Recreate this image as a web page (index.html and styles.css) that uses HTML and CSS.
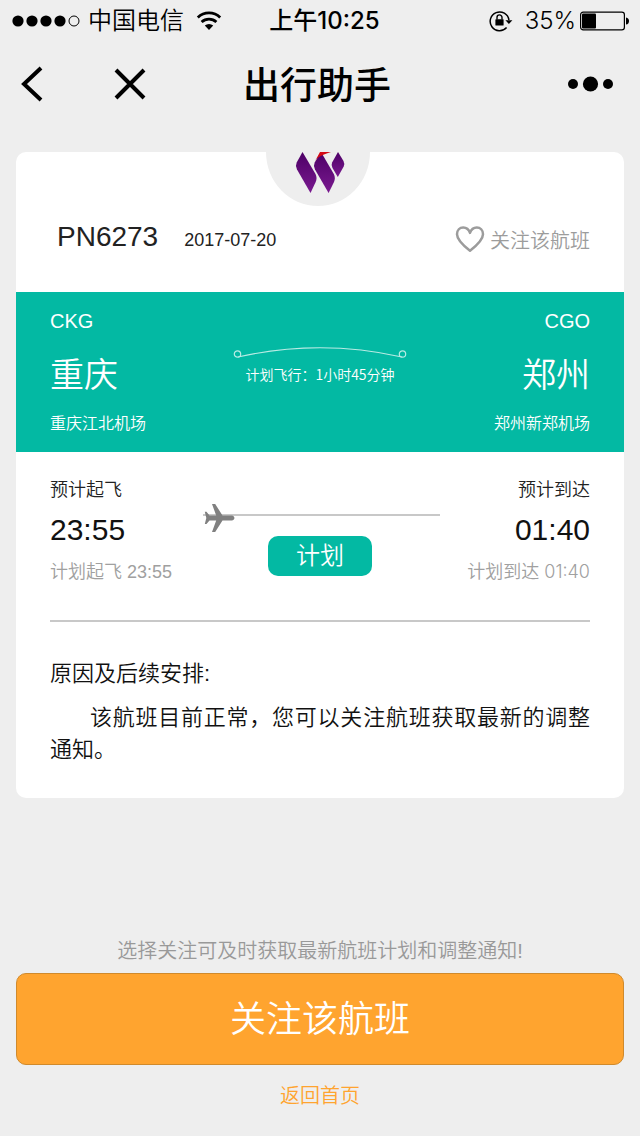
FILE: index.html
```
<!DOCTYPE html>
<html lang="zh-CN">
<head>
  <meta charset="UTF-8">
  <meta name="viewport" content="width=device-width, initial-scale=1.0">
  <title>出行助手</title>
  <link rel="stylesheet" href="styles.css">
</head>
<body>
  <div class="status-bar">
    <div class="carrier">
      <svg width="68" height="12" viewBox="0 0 68 12">
        <circle cx="6" cy="6" r="5.6"/><circle cx="20" cy="6" r="5.6"/><circle cx="34" cy="6" r="5.6"/><circle cx="48" cy="6" r="5.6"/>
        <circle cx="62" cy="6" r="5" fill="none" stroke="#000"/>
      </svg>
      <span>中国电信</span>
      <svg class="wifi" width="26" height="20" viewBox="0 0 26 20">
        <g fill="none" stroke="#000" stroke-width="2.8">
          <path d="M1.8 6.400a16.200 16.200 0 0 1 22.400 0"/>
          <path d="M5.600 11a10.800 10.800 0 0 1 14.800 0"/>
        </g>
        <path d="M13 19l-4.200-4.400a6 6 0 0 1 8.400 0z"/>
      </svg>
    </div>
    <span class="clock">上午10:25</span>
    <div class="power">
      <svg width="24" height="22" viewBox="0 0 24 22">
        <path d="M17.600 17.600A9.400 9.400 0 1 1 19.900 10" fill="none" stroke="#000" stroke-width="1.500"/>
        <path d="M16.400 10.200h7l-3.500 3.800z"/>
        <rect x="6.400" y="9.200" width="8.200" height="6.400" rx=".6"/>
        <path d="M8 9.600V7.400a2.500 2.500 0 0 1 5 0v2.200" fill="none" stroke="#000" stroke-width="1.400"/>
      </svg>
      <span class="percent">35%</span>
      <svg width="49" height="20" viewBox="0 0 49 20">
        <rect x=".6" y="1.100" width="43.800" height="17.800" rx="2.600" fill="none" stroke="#000" stroke-width="1.200"/>
        <rect x="2" y="2.600" width="14" height="14.800" rx="1"/>
        <path d="M46 6.400q3 .6 3 3.600t-3 3.600z"/>
      </svg>
    </div>
  </div>

  <header class="nav">
    <div class="nav-left">
      <button type="button" class="icon-btn" aria-label="返回">
        <svg width="24" height="36" viewBox="0 0 24 36"><path d="M21 2L4 18l17 16" fill="none" stroke="#000" stroke-width="4"/></svg>
      </button>
      <button type="button" class="icon-btn" aria-label="关闭">
        <svg width="32" height="32" viewBox="0 0 32 32"><path d="M2 2l28 28M30 2L2 30" stroke="#000" stroke-width="4"/></svg>
      </button>
    </div>
    <h1>出行助手</h1>
    <button type="button" class="icon-btn more" aria-label="更多">
      <svg width="46" height="16" viewBox="0 0 46 16"><circle cx="5" cy="8" r="5"/><circle cx="22.500" cy="8" r="7.600"/><circle cx="40" cy="8" r="5"/></svg>
    </button>
  </header>

  <main class="card">
    <section class="flight">
      <svg class="logo" width="108" height="54" viewBox="0 0 108 54">
        <defs>
          <linearGradient id="purple" x1="0" y1="0" x2="0" y2="1">
            <stop offset="0" stop-color="#4d0066"/>
            <stop offset="1" stop-color="#7a1a90"/>
          </linearGradient>
        </defs>
        <path d="M0 0a52 54 0 0 0 104 0z" fill="#eee"/>
        <g fill="url(#purple)">
          <path d="M36.500 0L49.500 22q2 3.800.2 8L44.500 41 31 17.500q-2-3.500-.3-7z"/>
          <path d="M55 0L67.800 22q2 3.800.2 8L62.600 41 49 17.500q-2-3.500-.3-7z"/>
          <path d="M72 0l5.500 9q1.400 2.500.2 5.500L71.800 25l-5.300-9q-1.600-2.800-.4-5.500z"/>
        </g>
        <path d="M54 0h11q-8 2.500-12 5-3 1.500-4.200 4.500z" fill="#d40a14"/>
      </svg>
      <div class="flight-row">
        <div class="flight-id">
          <span class="flight-no">PN6273</span>
          <time class="flight-date" datetime="2017-07-20">2017-07-20</time>
        </div>
        <button type="button" class="follow">
          <svg width="30" height="28" viewBox="0 0 30 28"><path d="M15 25.800C9.500 21.500 2 15.500 2 9.300 2 5.200 4.800 2.500 8.200 2.500c3 0 5.600 1.900 6.800 5.400 1.200-3.500 3.800-5.400 6.800-5.400 3.400 0 6.200 2.700 6.200 6.800 0 6.200-7.500 12.200-13 16.500z" fill="none" stroke="#9c9c9c" stroke-width="2.500" stroke-linejoin="round"/></svg>
          <span>关注该航班</span>
        </button>
      </div>
    </section>

    <section class="route">
      <div class="place">
        <span class="code">CKG</span>
        <strong class="city">重庆</strong>
        <span class="airport">重庆江北机场</span>
      </div>
      <div class="duration">
        <svg width="174" height="20" viewBox="0 0 174 20" fill="none" stroke="#b9ebe4" stroke-width="1.200">
          <circle cx="4.500" cy="10" r="3.200"/><circle cx="169.500" cy="10" r="3.200"/>
          <path d="M5 13Q87-5.500 169 13"/>
        </svg>
        <span>计划飞行：1小时45分钟</span>
      </div>
      <div class="place end">
        <span class="code">CGO</span>
        <strong class="city">郑州</strong>
        <span class="airport">郑州新郑机场</span>
      </div>
    </section>

    <section class="details">
      <div class="times">
        <div class="stop">
          <span class="stop-label">预计起飞</span>
          <time class="stop-time">23:55</time>
          <span class="stop-plan">计划起飞 23:55</span>
        </div>
        <div class="progress">
          <svg width="240" height="30" viewBox="0 0 240 30">
            <path d="M3 13h238" stroke="#c8c8c8" stroke-width="2"/>
            <path d="M12 2h3.200l7.300 11.500h9.700q2.300.8 2.300 2.500t-2.300 2.500h-9.700L15.200 30H12l4.200-11.500H9.500l-3 3.500H4.800l1.500-6-1.500-6.300h1.700l3 3.800h6.700z" fill="#808080"/>
          </svg>
          <span class="badge">计划</span>
        </div>
        <div class="stop end">
          <span class="stop-label">预计到达</span>
          <time class="stop-time">01:40</time>
          <span class="stop-plan alt">计划到达 01:40</span>
        </div>
      </div>
      <div class="notes">
        <h2>原因及后续安排:</h2>
        <p>该航班目前正常，您可以关注航班获取最新的调整通知。</p>
      </div>
    </section>
  </main>

  <footer class="actions">
    <p class="hint">选择关注可及时获取最新航班计划和调整通知!</p>
    <button type="button" class="primary">关注该航班</button>
    <a class="home" href="#">返回首页</a>
  </footer>
</body>
</html>
```
FILE: styles.css
```
* { box-sizing: border-box; }

body {
  margin: 0; min-height: 100vh;
  display: flex; flex-direction: column;
  background: #eee; color: #222;
  font-family: "Liberation Sans", "Noto Sans CJK SC", sans-serif;
  font-weight: 350;
}
h1, h2, p { margin: 0; font-weight: 350; }
button { border: 0; padding: 0; background: none; font: inherit; color: inherit; cursor: pointer; }
svg { display: block; flex: none; }

/* ---- phone status bar ---- */
.status-bar {
  display: grid; grid-template-columns: 1fr auto 1fr; align-items: center;
  height: 40px; padding: 2px 11px 0 12px; color: #000;
  font: 350 24px/38px Inter, "Noto Sans CJK SC", sans-serif;
}
.carrier, .power { display: flex; align-items: center; }
.carrier { gap: 8px; }
.wifi { margin-left: 4px; }
.clock { font-weight: 500; padding-left: 8px; }
.power { justify-content: flex-end; }
.percent { margin: 0 4px 0 12px; }

/* ---- title bar ---- */
.nav {
  display: grid; grid-template-columns: 1fr auto 1fr; align-items: center;
  height: 88px; padding: 0 26px 0 20px; color: #000;
}
.nav-left { display: flex; align-items: center; gap: 70px; }
.nav h1 { font-size: 37px; font-weight: 500; line-height: 48px; padding-top: 6px; }
.more { justify-self: end; }

/* ---- flight card ---- */
.card { margin: 24px 16px; background: #fff; border-radius: 10px; overflow: hidden; }
.flight { height: 140px; }
.logo { margin: 0 auto; }
.flight-row { display: flex; justify-content: space-between; padding: 11px 34px 0 41px; }
.flight-id { display: flex; align-items: baseline; gap: 26px; line-height: 40px; }
.flight-no { font-size: 28px; }
.flight-date { font-size: 18px; }
.follow { display: flex; align-items: flex-end; gap: 5px; padding-bottom: 7px; font-size: 20px; line-height: 24px; color: #9c9c9c; }

.route {
  display: grid; grid-template-columns: 1fr auto 1fr;
  padding: 16px 34px 16px; background: #03b9a3; color: #fff;
}
.place, .stop { display: flex; flex-direction: column; }
.end { text-align: right; }
.code { font-size: 20px; line-height: 26px; }
.city { font-size: 34px; line-height: 50px; margin: 16px 0 12px; font-weight: 350; }
.airport { font-size: 16px; line-height: 24px; }
.duration {
  display: flex; flex-direction: column; align-items: center; padding-top: 36px;
  font: 350 14px/20px "Noto Sans CJK SC", sans-serif;
}

.details { padding: 26px 34px 32px; }
.times { display: grid; grid-template-columns: 1fr 240px 1fr; padding-bottom: 34px; border-bottom: 2px solid #c8c8c8; }
.stop { gap: 8px; white-space: nowrap; }
.stop-label { font-size: 18px; line-height: 24px; }
.stop-time { font-size: 30px; line-height: 40px; color: #111; }
.stop-plan { font-size: 18px; line-height: 28px; color: #a0a0a0; }
.alt { font-family: Inter, "Noto Sans CJK SC", sans-serif; }
.progress { display: flex; flex-direction: column; align-items: center; gap: 4px; padding-top: 24px; }
.badge {
  width: 104px; border-radius: 10px; background: #03b9a3; color: #fff;
  font-size: 24px; line-height: 40px; text-align: center;
}

.notes { padding-top: 36px; font-size: 22px; line-height: 32px; color: #111; }
.notes h2 { font-size: 22px; margin-bottom: 12px; }
.notes p { text-indent: 40px; text-align: justify; }

/* ---- bottom actions ---- */
.actions { margin-top: auto; padding: 0 16px 26px; text-align: center; font-size: 20px; line-height: 28px; }
.hint { color: #999; margin-bottom: 8px; }
.primary {
  display: block; width: 100%; height: 92px; margin-bottom: 17px; padding-top: 2px;
  background: #ffa42f; border: 1px solid #d08a2c; border-radius: 10px;
  color: #fff; font-size: 36px;
}
.home { color: #ffa42f; text-decoration: none; }
```
